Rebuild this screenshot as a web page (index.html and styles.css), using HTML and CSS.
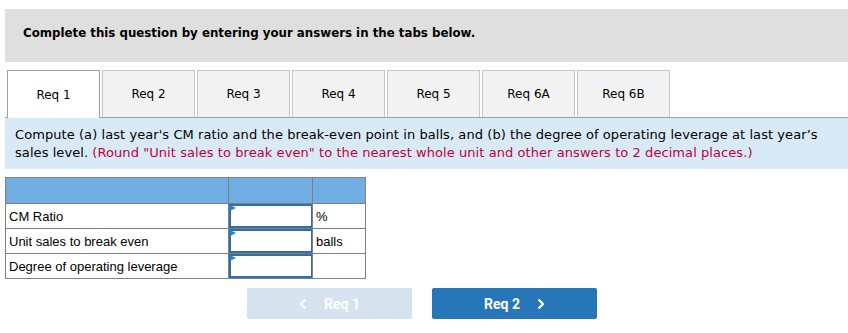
FILE: index.html
```html
<!DOCTYPE html>
<html>

<head>
    <title>Req 1</title>
    <link rel="stylesheet" href="styles.css">
</head>

<body>
    <div class="page">
        <div class="banner">Complete this question by entering your answers in the tabs below.</div>

        <div class="tabs">
            <div class="tab active">Req 1</div>
            <div class="tab">Req 2</div>
            <div class="tab">Req 3</div>
            <div class="tab">Req 4</div>
            <div class="tab">Req 5</div>
            <div class="tab">Req 6A</div>
            <div class="tab">Req 6B</div>
        </div>

        <div class="prompt">
            Compute (a) last year's CM ratio and the break-even point in balls, and (b) the degree of operating leverage at last year’s
            sales level. <span class="hint">(Round "Unit sales to break even" to the nearest whole unit and other answers to 2 decimal places.)</span>
        </div>

        <table class="answers">
            <tr class="head">
                <th class="c1"></th>
                <th class="c2"></th>
                <th class="c3"></th>
            </tr>
            <tr>
                <td>CM Ratio</td>
                <td class="cell"><div class="box"></div></td>
                <td>%</td>
            </tr>
            <tr>
                <td>Unit sales to break even</td>
                <td class="cell"><div class="box"></div></td>
                <td>balls</td>
            </tr>
            <tr>
                <td>Degree of operating leverage</td>
                <td class="cell"><div class="box"></div></td>
                <td></td>
            </tr>
        </table>

        <div class="nav">
            <button class="btn prev" disabled>
                <svg width="8" height="12" viewBox="0 0 8 12"><path d="M6.5 1.5 L2 6 L6.5 10.5" fill="none" stroke="#fff" stroke-width="2.2"/></svg>
                <span>Req 1</span>
            </button>
            <button class="btn next">
                <span>Req 2</span>
                <svg width="8" height="12" viewBox="0 0 8 12"><path d="M1.5 1.5 L6 6 L1.5 10.5" fill="none" stroke="#fff" stroke-width="2.2"/></svg>
            </button>
        </div>
    </div>
</body>

</html>
```

FILE: styles.css
```css
body {
    margin: 0;
    background: #fff;
    font-family: "DejaVu Sans", Verdana, sans-serif;
    color: #000;
}

.page {
    padding: 9px 0 0 5px;
}

.banner {
    height: 53px;
    box-sizing: border-box;
    background-color: #dfdfdf;
    padding: 0 0 6px 18px;
    display: flex;
    align-items: center;
    font-size: 11.8px;
    font-weight: bold;
}

.tabs {
    display: flex;
    gap: 2px;
    margin-top: 8px;
    padding-left: 2px;
    border-bottom: 1px solid #a0a0a0;
}

.tab {
    width: 93px;
    height: 47px;
    box-sizing: border-box;
    display: flex;
    align-items: center;
    justify-content: center;
    font-size: 12px;
    background-color: #f2f2f2;
    border: 1px solid #c6c6c6;
    border-bottom: none;
}

.tab.active {
    background-color: #fff;
    border-color: #a0a0a0;
    height: 48px;
    margin-bottom: -1px;
}

.prompt {
    background-color: #d9eaf7;
    padding: 8px 20px 7px 10px;
    font-family: "DejaVu Sans", sans-serif;
    font-size: 13px;
    letter-spacing: 0.07px;
    line-height: 18px;
}

.hint {
    color: #c0003c;
}

.answers {
    margin-top: 8px;
    border-collapse: collapse;
    font-family: "Liberation Sans", Arial, sans-serif;
    font-size: 13px;
}

.answers th,
.answers td {
    border: 1px solid #808080;
    padding: 0 0 0 3px;
    height: 24px;
    text-align: left;
}

.answers .head th {
    background-color: #6fade3;
    height: 25px;
}

.c1 {
    width: 219px;
}

.c2 {
    width: 80px;
}

.c3 {
    width: 49px;
}

.answers td.cell {
    padding: 0;
    position: relative;
}

.box {
    height: 24px;
    box-sizing: border-box;
    border: 2px solid #2f6ea6;
    border-right-width: 1px;
}

.cell::before {
    content: "";
    position: absolute;
    left: 1px;
    top: 1px;
    border-left: 6px solid #2f80d0;
    border-top: 3px solid transparent;
    border-bottom: 3px solid transparent;
}

.nav {
    display: flex;
    gap: 20px;
    padding: 9px 0 0 242px;
}

.btn {
    width: 165px;
    height: 31px;
    border: none;
    border-radius: 2px;
    display: flex;
    align-items: center;
    justify-content: center;
    gap: 17px;
    font-family: Roboto, sans-serif;
    font-size: 14px;
    font-weight: bold;
    color: #fff;
}

.prev {
    background-color: #d5e2f0;
}

.next {
    background-color: #2777b8;
}
```
